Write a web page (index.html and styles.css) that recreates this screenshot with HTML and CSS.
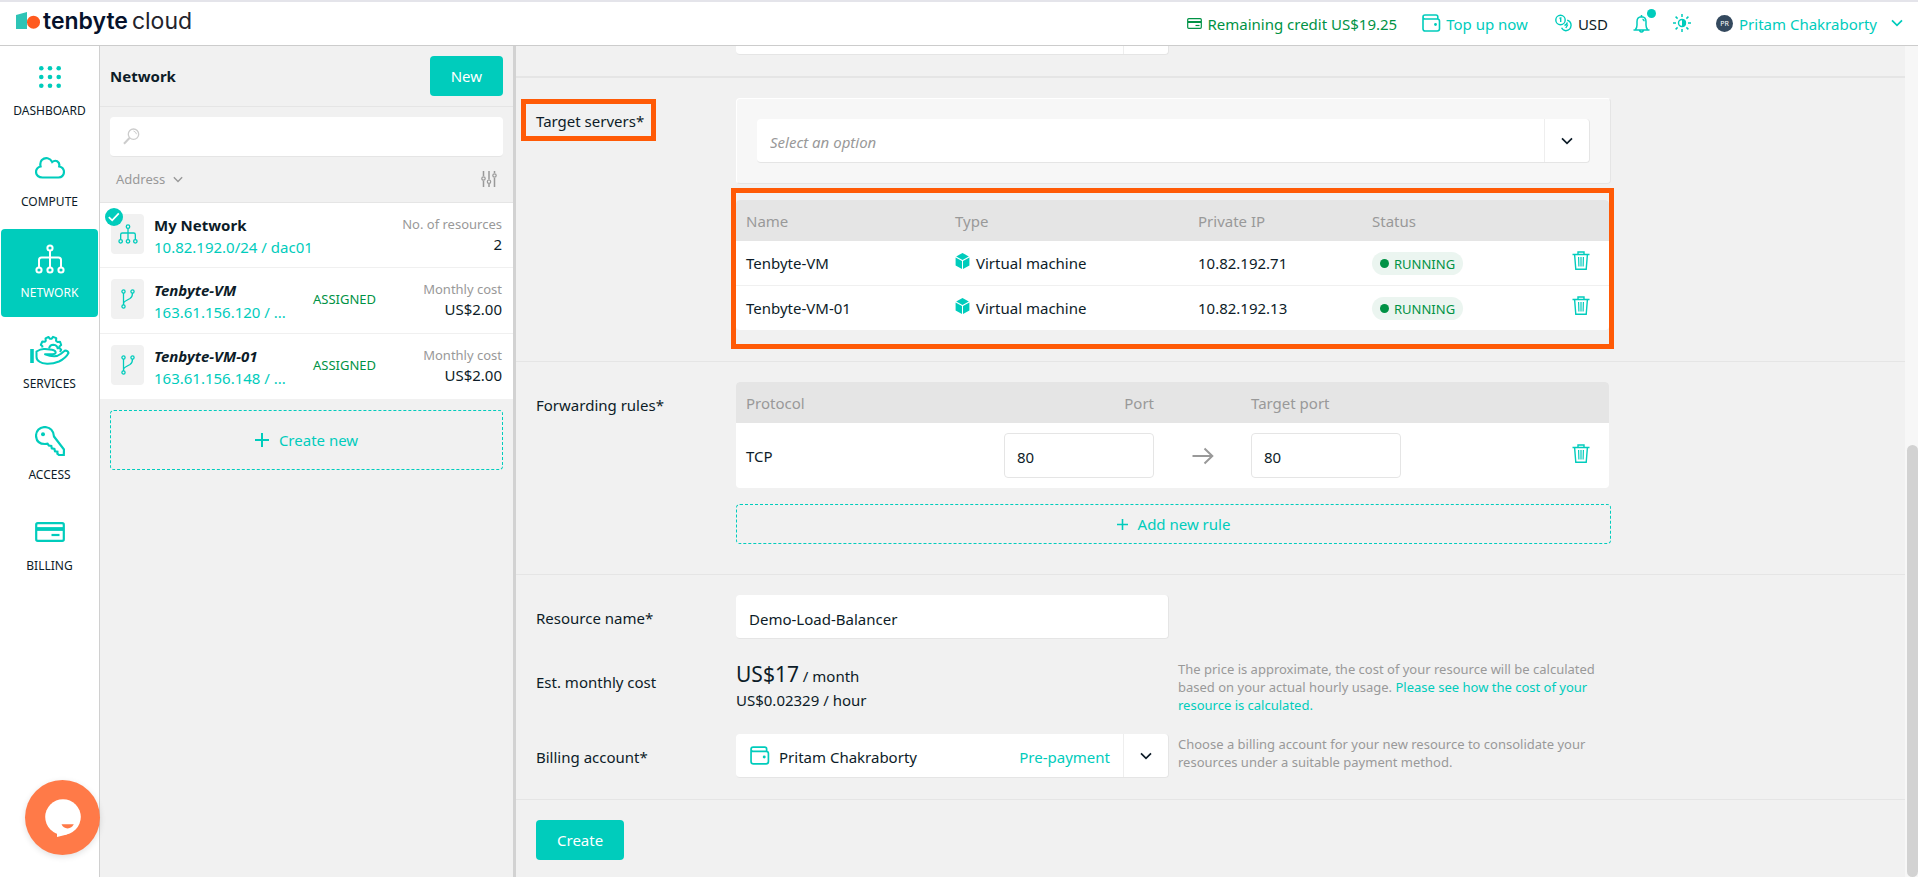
FILE: index.html
```html
<!DOCTYPE html>
<html lang="en">
<head>
<meta charset="utf-8">
<title>Tenbyte Cloud - Network</title>
<link rel="stylesheet" href="styles.css">
</head>
<body>
<svg class="defs" aria-hidden="true">
  <symbol id="i-tree" viewBox="0 0 30 30"><g fill="none" stroke="currentColor" stroke-width="2"><circle cx="15" cy="4" r="2.6"/><circle cx="4" cy="26" r="2.6"/><circle cx="15" cy="26" r="2.6"/><circle cx="26" cy="26" r="2.6"/><path d="M15 6.600V23.400M4 23.400V16q0-2.500 2.500-2.500h17Q26 13.500 26 16v7.400"/></g></symbol>
  <symbol id="i-branch" viewBox="0 0 14 20"><g fill="none" stroke="currentColor" stroke-width="1.300"><circle cx="2.500" cy="2.500" r="1.600"/><circle cx="11.500" cy="2.500" r="1.600"/><circle cx="2.500" cy="17.500" r="1.600"/><path d="M2.500 4v12M11.500 4q0 4-2.500 5.500L4.500 12q-2 1-2 3"/></g></symbol>
  <symbol id="i-trash" viewBox="0 0 18 19"><g fill="none" stroke="currentColor" stroke-width="1.400"><path d="M.5 3.500h17M6 3.300V1h6v2.300M2.600 3.600l1.200 14.600h10.400l1.200-14.600"/><path d="M6.600 6l.3 9.500M9 6v9.500M11.400 6l-.3 9.500" stroke-width="1.200"/></g></symbol>
  <symbol id="i-cube" viewBox="0 0 15 16"><g fill="currentColor"><path d="M7.500 0l6.300 3.400-6.300 3.500-6.300-3.500z"/><path d="M.6 4.400L7 7.900V16L.6 12.400zM14.400 4.400L8 7.900V16l6.400-3.600z"/></g></symbol>
  <symbol id="i-wallet" viewBox="0 0 19 18"><g fill="none" stroke="currentColor" stroke-width="1.600"><path d="M1 3v11.700Q1 17 3.300 17h12q2.200 0 2.200-2.200V7.200Q17.500 5 15.300 5H3Q1 5 1 3t2-2h11q1.800 0 1.800 1.800V5"/></g><circle cx="13.500" cy="10.500" r="1.400" fill="currentColor"/></symbol>
  <symbol id="i-down" viewBox="0 0 12 8"><path d="M1 1.300l5 5 5-5" fill="none" stroke="currentColor" stroke-width="1.700"/></symbol>
  <symbol id="i-plus" viewBox="0 0 14 14"><path d="M7 0v14M0 7h14" stroke="currentColor" stroke-width="2"/></symbol>
</svg>

<header class="topbar">
  <a class="logo" href="#" aria-label="tenbyte cloud">
    <svg width="24" height="18" viewBox="0 0 24 18"><path d="M0 3L11 0v17H0z" fill="#2ec4b6"/><circle cx="17.500" cy="10.200" r="6.500" fill="#ff5a1f"/></svg>
    <span class="logo-bold">tenbyte</span><span class="logo-light">cloud</span>
  </a>
  <nav class="tools" aria-label="Account">
    <a class="tool credit" href="#"><svg width="15" height="11" viewBox="0 0 15 11"><rect x=".7" y=".7" width="13.600" height="9.600" rx="1" fill="none" stroke="currentColor" stroke-width="1.200"/><path d="M1 4h13" stroke="currentColor" stroke-width="2"/><path d="M8.500 7.500h4" stroke="currentColor" stroke-width="1.200"/></svg>Remaining credit US$19.25</a>
    <a class="tool topup" href="#"><svg width="19" height="18"><use href="#i-wallet"/></svg>Top up now</a>
    <button class="tool currency"><svg width="17" height="18" viewBox="0 0 17 18"><g fill="none" stroke="#00ccbc" stroke-width="1.400"><circle cx="5.500" cy="6" r="4.700"/><path d="M4.500 4.500L5.700 4v4M12.200 6.300q3.700 1 3.900 5-.4 5-5.300 5.400-3-.2-4.200-2.900M9.500 11.500q2.300-.8 2.900-3M10.800 14l2-3.500"/></g></svg>USD</button>
    <button class="tool bell" aria-label="Notifications"><svg width="17" height="19" viewBox="0 0 17 19"><path d="M.5 16h16M2.500 15.500Q4 13.500 4 11V7.500Q4 3 8.500 2.800 13 3 13 7.500V11q0 2.500 1.500 4.500M8.500 2.800V1M9.500 5.300q1.600.3 1.700 2M6.500 16.500q2 3 4 0" fill="none" stroke="currentColor" stroke-width="1.500"/></svg><span class="dot"></span></button>
    <button class="tool theme" aria-label="Theme"><svg width="18" height="18" viewBox="0 0 18 18"><path d="M9 0v3M9 15v3M0 9h3M15 9h3M2.600 2.600l2 2M13.400 13.400l2 2M2.600 15.400l2-2M13.400 4.600l2-2" stroke="currentColor" stroke-width="1.500"/><circle cx="9" cy="9" r="3.500" fill="none" stroke="currentColor" stroke-width="1.400"/><path d="M9 5a4 4 0 0 1 0 8z" fill="currentColor"/></svg></button>
    <button class="tool user"><span class="avatar">PR</span>Pritam Chakraborty<svg class="user-down" width="12" height="8"><use href="#i-down"/></svg></button>
  </nav>
</header>

<div class="shell">
  <nav class="sidebar" aria-label="Main">
    <a class="side-item" href="#"><span class="side-icon"><svg width="22" height="22" viewBox="0 0 22 22" fill="currentColor"><circle cx="2.300" cy="2.300" r="2.300"/><circle cx="11" cy="2.300" r="2.300"/><circle cx="19.700" cy="2.300" r="2.300"/><circle cx="2.300" cy="11" r="2.300"/><circle cx="11" cy="11" r="2.300"/><circle cx="19.700" cy="11" r="2.300"/><circle cx="2.300" cy="19.700" r="2.300"/><circle cx="11" cy="19.700" r="2.300"/><circle cx="19.700" cy="19.700" r="2.300"/></svg></span>DASHBOARD</a>
    <a class="side-item" href="#"><span class="side-icon"><svg width="30" height="22" viewBox="0 0 30 22"><path d="M7.500 20.500Q1.200 20.200 1 14.800 1.300 10.500 5.600 9.500 4.600 5.500 6.800 3 9.500.6 12.600 1.300q3 .7 4.600 3.700 2.400-2 5-.8 2.800 1.500 2 5.300Q28.800 10.500 29 14.800q-.2 5.400-5.500 5.700z" fill="none" stroke="currentColor" stroke-width="2.200"/></svg></span>COMPUTE</a>
    <a class="side-item active" href="#"><span class="side-icon"><svg width="30" height="30"><use href="#i-tree"/></svg></span>NETWORK</a>
    <a class="side-item" href="#"><span class="side-icon"><svg width="40" height="30" viewBox="0 0 40 30"><g fill="none" stroke="currentColor" stroke-width="2" stroke-linejoin="round"><path d="M2 14v14" stroke-width="3.600"/><path d="M6.500 16.500q4.500-3 8.500-2.500l7 .8q3.500.5 3.700 2.700-.2 1.700-3.200 1.700H15q5 1.700 9 2 3.500.2 7-2.500l4-3.300q3.200.3 3.500 2.600-2.500 5-9.500 8.500-6 2.500-12 2.300-5-.3-7.500-2.100-3-1.500-3-5z"/><path d="M12.500 12.500l-.2-1.500-1.500-1 1.500-3.500 2.500.3 1-1-.3-2.500 3-1.300 1.500 1.800h1.500L23 1.800l3.300 1.400-.3 2.500 1.500 1.300 2.500-.3 1.200 3.300-1.800 1.500v1.500l1.800 1.800-1.200 2.200M19 13.500q1-3.700 4.300-3.700 4.200.3 4.500 4.500"/></g></svg></span>SERVICES</a>
    <a class="side-item" href="#"><span class="side-icon"><svg width="30" height="30" viewBox="0 0 30 30"><path d="M19 10.500Q18.500 2 10 1 1.500 1.500 1 9.800 1.500 18 10 18l2.500-.3 1.300 1.800 2.500.4.500 2.500 2.600.6.600 2.300 2.400.4v2l1.600 1.300h4.800l.2-5.500z" fill="none" stroke="currentColor" stroke-width="2.200"/><circle cx="8" cy="8.300" r="2" fill="currentColor"/></svg></span>ACCESS</a>
    <a class="side-item" href="#"><span class="side-icon"><svg width="30" height="20" viewBox="0 0 30 20"><rect x="1.200" y="1.200" width="27.600" height="17.600" rx="1.500" fill="none" stroke="currentColor" stroke-width="2.200"/><path d="M1 7h28" stroke="currentColor" stroke-width="3.800"/><path d="M16.500 13h8" stroke="currentColor" stroke-width="2.200"/></svg></span>BILLING</a>
  </nav>

  <section class="panel" aria-label="Network resources">
    <div class="panel-head"><h1>Network</h1><button class="btn">New</button></div>
    <div class="panel-tools">
      <label class="search"><svg width="17" height="17" viewBox="0 0 17 17"><g fill="none" stroke="currentColor" stroke-width="1.300"><circle cx="10.500" cy="6.200" r="5.200"/><path d="M10.500 3q2.500.7 3 3.200" stroke-width="1"/><path d="M6.500 10L1 15.800" stroke-width="2"/></g></svg><input type="search" aria-label="Search"></label>
      <div class="sortbar">
        <button class="sort">Address<svg width="10" height="7"><use href="#i-down"/></svg></button>
        <button class="filter" aria-label="Filters"><svg width="16" height="16" viewBox="0 0 16 16"><path d="M2.500 0v5M2.500 10v6M8 0v8.500M8 13v3M13.500 0v2M13.500 7v9" stroke="currentColor" stroke-width="1.500"/><g fill="none" stroke="currentColor" stroke-width="1.200"><circle cx="2.500" cy="7.500" r="1.700"/><circle cx="8" cy="10.700" r="1.700"/><circle cx="13.500" cy="4.500" r="1.700"/></g></svg></button>
      </div>
    </div>
    <ul class="list">
      <li class="item">
        <span class="thumb"><svg width="20" height="20"><use href="#i-tree"/></svg><svg class="check" width="18" height="18" viewBox="0 0 18 18"><circle cx="9" cy="9" r="9" fill="#00ccbc"/><path d="M3.800 9.200l3.400 3.200 6.600-7" fill="none" stroke="#fff" stroke-width="1.700"/></svg></span>
        <span class="item-main"><strong>My Network</strong><a href="#">10.82.192.0/24 / dac01</a></span>
        <span class="item-side"><small>No. of resources</small><span>2</span></span>
      </li>
      <li class="item vm">
        <span class="thumb"><svg width="14" height="20"><use href="#i-branch"/></svg></span>
        <span class="item-main"><strong>Tenbyte-VM</strong><a href="#">163.61.156.120 / ...</a></span>
        <span class="assigned">ASSIGNED</span>
        <span class="item-side"><small>Monthly cost</small><span>US$2.00</span></span>
      </li>
      <li class="item vm">
        <span class="thumb"><svg width="14" height="20"><use href="#i-branch"/></svg></span>
        <span class="item-main"><strong>Tenbyte-VM-01</strong><a href="#">163.61.156.148 / ...</a></span>
        <span class="assigned">ASSIGNED</span>
        <span class="item-side"><small>Monthly cost</small><span>US$2.00</span></span>
      </li>
    </ul>
    <button class="dashed create-new"><svg width="14" height="14"><use href="#i-plus"/></svg>Create new</button>
  </section>

  <main class="content">
    <form class="form">
      <section class="block block-cut">
        <div class="field"><span class="label"></span><div class="control half"><div class="select"><select aria-label="Network"><option></option></select><span class="caret"></span></div></div></div>
      </section>

      <section class="block block-servers">
        <div class="field">
          <label class="label marked" for="servers">Target servers*</label>
          <div class="control">
            <div class="card"><div class="select"><select id="servers" class="empty"><option>Select an option</option></select><span class="caret"><svg width="12" height="8"><use href="#i-down"/></svg></span></div></div>
            <div class="table-wrap boxed">
              <table class="table">
                <colgroup><col class="c-name"><col class="c-type"><col class="c-ip"><col class="c-status"><col></colgroup>
                <thead><tr><th>Name</th><th>Type</th><th>Private IP</th><th>Status</th><th></th></tr></thead>
                <tbody>
                  <tr><td>Tenbyte-VM</td><td><span class="type"><svg width="15" height="16"><use href="#i-cube"/></svg>Virtual machine</span></td><td>10.82.192.71</td><td><span class="badge">RUNNING</span></td><td class="act"><button type="button" aria-label="Delete"><svg width="18" height="19"><use href="#i-trash"/></svg></button></td></tr>
                  <tr><td>Tenbyte-VM-01</td><td><span class="type"><svg width="15" height="16"><use href="#i-cube"/></svg>Virtual machine</span></td><td>10.82.192.13</td><td><span class="badge">RUNNING</span></td><td class="act"><button type="button" aria-label="Delete"><svg width="18" height="19"><use href="#i-trash"/></svg></button></td></tr>
                </tbody>
              </table>
            </div>
          </div>
        </div>
      </section>

      <section class="block">
        <div class="field">
          <span class="label">Forwarding rules*</span>
          <div class="control">
            <div class="table-wrap">
              <table class="table rules">
                <colgroup><col class="r-proto"><col class="r-port"><col class="r-arrow"><col class="r-target"><col></colgroup>
                <thead><tr><th>Protocol</th><th class="right">Port</th><th></th><th>Target port</th><th></th></tr></thead>
                <tbody><tr><td>TCP</td><td><input class="port" value="80" aria-label="Port"></td><td class="arrow"><svg width="22" height="18" viewBox="0 0 22 18"><path d="M.5 9h20M12.500 1.500L20.300 9l-7.800 7.500" fill="none" stroke="currentColor" stroke-width="2"/></svg></td><td><input class="port" value="80" aria-label="Target port"></td><td class="act"><button type="button" aria-label="Delete"><svg width="18" height="19"><use href="#i-trash"/></svg></button></td></tr></tbody>
              </table>
            </div>
            <button type="button" class="dashed add-rule"><svg width="11" height="11"><use href="#i-plus"/></svg>Add new rule</button>
          </div>
        </div>
      </section>

      <section class="block block-tail">
        <div class="field">
          <label class="label" for="rname">Resource name*</label>
          <div class="control half"><input class="text" id="rname" value="Demo-Load-Balancer"></div>
        </div>
        <div class="field">
          <span class="label">Est. monthly cost</span>
          <div class="control half cost"><div><span class="big">US$17</span> / month</div><div>US$0.02329 / hour</div></div>
          <p class="help">The price is approximate, the cost of your resource will be calculated based on your actual hourly usage. <a href="#">Please see how the cost of your resource is calculated.</a></p>
        </div>
        <div class="field">
          <label class="label" for="billing">Billing account*</label>
          <div class="control half"><div class="select billing"><svg width="20" height="19"><use href="#i-wallet"/></svg><select id="billing"><option>Pritam Chakraborty</option></select><span class="prepay">Pre-payment</span><span class="caret"><svg width="12" height="8"><use href="#i-down"/></svg></span></div></div>
          <p class="help">Choose a billing account for your new resource to consolidate your resources under a suitable payment method.</p>
        </div>
      </section>

      <section class="block block-last"><button type="submit" class="btn">Create</button></section>
    </form>
  </main>
  <div class="scroll"><span class="scroll-thumb"></span></div>
</div>

<button class="chat" aria-label="Chat"><svg width="36" height="38" viewBox="0 0 36 38"><circle cx="18" cy="18" r="17.800" fill="#fff"/><path d="M12 33v5l9-2.200 6-3.600z" fill="#fff"/><path d="M16.500 25.200h12.300q-2 4-6.200 4.200-4.400-.3-6.100-4.200z" fill="#ff7a48"/></svg></button>
</body>
</html>
```
FILE: styles.css
```css
:root {
  --teal: #00ccbc;
  --green: #009245;
  --ink: #0d1c28;
  --muted: #999;
  --bg: #f1f1f1;
  --line: #e5e5e5;
  --mark: #ff5a06;
}
*, *::before, *::after { box-sizing: border-box; }
body {
  margin: 0;
  height: 100vh;
  display: flex;
  flex-direction: column;
  overflow: hidden;
  background: #fff;
  color: var(--ink);
  font: 15px/22px "Noto Sans", "Open Sans", sans-serif;
}
.defs { position: absolute; width: 0; height: 0; }
svg { flex: none; }
button { font: inherit; color: inherit; background: none; border: 0; padding: 0; cursor: pointer; }
input, select { font: inherit; color: inherit; }
a { color: var(--teal); text-decoration: none; }

/* top bar */
.topbar {
  flex: none;
  height: 46px;
  padding: 0 15px 0 16px;
  display: flex;
  align-items: center;
  justify-content: space-between;
  border-top: 2px solid #e4e4ea;
  border-bottom: 1px solid #ccc;
}
.logo { display: flex; align-items: center; color: #06122c; font: 23px/28px Inter, sans-serif; padding-bottom: 5px; }
.logo-bold { font-weight: 600; margin: 0 4px 0 3px; }
.logo-light { font-weight: 400; color: #23232b; }
.tools { display: flex; align-items: center; padding-top: 1px; }
.tool { display: flex; align-items: center; color: var(--teal); }
.tool svg { margin-bottom: 2px; }
.credit { gap: 5px; color: var(--green); margin-right: 25px; }
.topup { gap: 5px; margin-right: 27px; }
.currency { gap: 6px; color: var(--ink); margin-right: 25px; }
.bell { position: relative; margin-right: 23px; }
.dot { position: absolute; top: -5px; right: -6px; width: 9px; height: 9px; border-radius: 50%; background: var(--teal); }
.theme { margin-right: 25px; }
.user { gap: 6px; }
.user-down { margin-left: 8px; }
.avatar { width: 17px; height: 17px; margin-bottom: 2px; border-radius: 50%; background: #34495e; color: #fff; font-size: 7px; line-height: 17px; text-align: center; }

.shell { flex: 1; min-height: 0; display: flex; }

/* sidebar */
.sidebar { flex: none; width: 100px; padding: 1px 1px 0; border-right: 1px solid #d0d0d0; display: flex; flex-direction: column; gap: 3px; }
.side-item { height: 88px; border-radius: 4px; display: flex; flex-direction: column; align-items: center; color: var(--ink); font-size: 12px; line-height: 18px; }
.side-icon { height: 55px; padding-top: 5px; display: flex; align-items: center; color: var(--teal); }
.side-item.active, .side-item.active .side-icon { color: #fff; }
.side-item.active { background: var(--teal); }

/* resource panel */
.panel { flex: none; width: 416px; background: var(--bg); border-right: 3px solid #d2d2d2; }
.panel-head { display: flex; align-items: center; justify-content: space-between; padding: 10px; border-bottom: 1px solid var(--line); }
h1 { margin: 0; font-size: 15px; font-weight: 700; }
.btn { height: 40px; padding: 0 21px; border-radius: 4px; background: var(--teal); color: #fff; }
.panel-tools { padding: 10px 10px 0; border-bottom: 1px solid var(--line); }
.search { height: 40px; display: flex; align-items: center; gap: 8px; padding: 0 13px; background: #fff; border-radius: 4px; border-bottom: 1px solid var(--line); color: #ccc; }
.search input { flex: 1; min-width: 0; border: 0; outline: 0; background: none; }
.sortbar { display: flex; align-items: center; justify-content: space-between; height: 45px; padding: 0 6px 1px; color: var(--muted); }
.sort { display: flex; align-items: center; gap: 8px; font-size: 13px; }
.filter { line-height: 0; }
.list { list-style: none; margin: 0; padding: 0; background: #fff; }
.item { display: flex; padding: 11px 11px 9px; border-bottom: 1px solid #f0f0f0; }
.item.vm { padding-bottom: 10px; }
.item:last-child { border-bottom: 0; }
.thumb { position: relative; flex: none; width: 33px; height: 40px; margin-right: 10px; border-radius: 4px; background: #f1f1f1; color: var(--teal); display: flex; align-items: center; justify-content: center; }
.check { position: absolute; left: -6px; top: -6px; }
.item-main { flex: none; width: 159px; display: flex; flex-direction: column; white-space: nowrap; }
.vm strong { font-style: italic; }
.assigned { height: 40px; line-height: 40px; color: var(--green); font-size: 13px; }
.item-side { margin-left: auto; display: flex; flex-direction: column; align-items: flex-end; line-height: 20px; }
.item-side small { font-size: 13px; color: var(--muted); }
.dashed { display: flex; align-items: center; justify-content: center; border: 1px dashed var(--teal); border-radius: 4px; color: var(--teal); }
.create-new { width: 393px; height: 60px; margin: 11px 10px 0; gap: 10px; }

/* form */
.content { flex: 1; min-width: 0; overflow: hidden; background: var(--bg); }
.block { padding: 20px 20px 30px; border-bottom: 1px solid var(--line); }
.block-cut { padding: 0 20px 21px; margin-top: -35px; border-bottom-width: 2px; }
.block-servers { padding-bottom: 31px; }
.block-tail { padding-bottom: 21px; }
.block-last { border: 0; }
.field { display: flex; align-items: flex-start; max-width: 1075px; }
.field + .field { margin-top: 20px; }
.label { flex: none; width: 200px; height: 44px; line-height: 46px; position: relative; }
.control { flex: 1; min-width: 0; }
.control.half { flex: none; width: 433px; }
.marked::before { content: ""; position: absolute; left: -15px; top: 1px; width: 135px; height: 42px; border: 5px solid var(--mark); }
.select, .text { width: 100%; height: 44px; background: #fff; border: 0 solid var(--line); border-width: 0 1px 1px 0; border-radius: 4px; }
.select { display: flex; align-items: center; }
.select select { flex: 1; min-width: 0; height: 40px; padding: 2px 13px 0; appearance: none; border: 0; outline: 0; background: none; }
.select .empty { color: var(--muted); font-style: italic; }
.caret { width: 45px; align-self: stretch; border-left: 1px solid #eee; display: flex; align-items: center; justify-content: center; }
.text { display: block; padding: 4px 13px 0; }
.card { padding: 20px; background: #f7f7f7; border: 1px solid var(--line); border-top-color: #fff; border-left-color: #fff; border-radius: 4px; }
.table-wrap { position: relative; margin: 16px 2px 0 0; }
.control > .table-wrap:first-child { margin-top: 0; }
.boxed::after { content: ""; position: absolute; inset: -12px -5px -19px -5px; border: 5px solid var(--mark); pointer-events: none; }
.table { width: 100%; table-layout: fixed; border-collapse: separate; border-spacing: 0; background: #fff; border-radius: 4px; overflow: hidden; }
.c-name { width: 209px; }
.c-type { width: 243px; }
.c-ip { width: 174px; }
.c-status { width: 150px; }
.r-proto { width: 258px; }
.r-port { width: 170px; }
.r-arrow { width: 77px; }
.r-target { width: 170px; }
.table th { height: 41px; padding: 1px 10px 0; background: #e5e5e5; color: var(--muted); font-weight: 400; text-align: left; }
.table th.right { text-align: right; }
.table td { height: 44px; padding: 0 10px; }
.table tr + tr td { height: 45px; border-top: 1px solid #f0f0f0; }
.type { display: flex; align-items: center; gap: 6px; }
.type svg { margin-bottom: 4px; color: var(--teal); }
.badge { display: inline-flex; align-items: center; gap: 5px; height: 23px; padding: 0 8px; border-radius: 12px; background: #ebf5f0; color: var(--green); font-size: 13px; }
.badge::before { content: ""; width: 9px; height: 9px; border-radius: 50%; background: var(--green); }
.table .act { text-align: right; padding-right: 19px; }
.act button { line-height: 0; color: var(--teal); vertical-align: middle; margin-bottom: 5px; }
.rules td { height: 65px; }
.port { width: 100%; height: 45px; padding: 3px 12px 0; border: 1px solid var(--line); border-radius: 4px; background: #fff; }
.table .arrow { color: var(--muted); text-align: center; line-height: 0; }
.add-rule { width: 100%; height: 40px; margin-top: 16px; gap: 10px; }
.cost { height: 55px; line-height: 24px; padding-top: 3px; }
.big { font-size: 21px; }
.help { flex: 1; margin: 0 0 0 9px; padding-top: 1px; max-width: 425px; font-size: 13px; line-height: 18px; color: var(--muted); }
.billing > svg { margin-left: 14px; color: var(--teal); }
.billing select { padding-left: 9px; }
.prepay { color: var(--teal); padding: 2px 13px 0; }

.scroll { flex: none; width: 13px; padding-left: 2px; background: #f7f7f7; display: flex; flex-direction: column; justify-content: flex-end; }
.scroll-thumb { height: 52%; border-radius: 6px; background: #d2d2d2; }

.chat { position: fixed; left: 25px; bottom: 22px; width: 75px; height: 75px; border-radius: 50%; background: #ff7a48; display: flex; align-items: center; justify-content: center; box-shadow: 0 2px 6px rgba(0, 0, 0, .12); }
```
